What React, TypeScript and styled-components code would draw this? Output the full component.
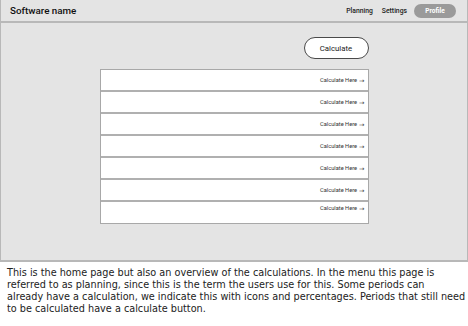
import React from "react";
import styled, { createGlobalStyle } from "styled-components";

const Global = createGlobalStyle`
  html, body { margin: 0; padding: 0; background: #ffffff; }
  body { width: 468px; height: 326px; overflow: hidden; }
`;

const Page = styled.div`
  width: 468px;
  display: flex;
  flex-direction: column;
`;

const Frame = styled.div`
  height: 262px;
  box-sizing: border-box;
  background: #e4e4e4;
  border-left: 1px solid #b8b8b8;
  border-right: 1px solid #b8b8b8;
  border-bottom: 2px solid #b8b8b8;
  display: flex;
  flex-direction: column;
`;

const Header = styled.header`
  height: 23px;
  box-sizing: border-box;
  border-bottom: 2px solid #b8b8b8;
  display: flex;
  align-items: center;
  padding: 0 11px 0 9px;
`;

const Brand = styled.div`
  font-family: Roboto, "Liberation Sans", sans-serif;
  font-weight: 500;
  font-size: 9.8px;
  color: #111;
  flex: 1;
`;

const Nav = styled.nav`
  display: flex;
  align-items: center;
  gap: 9px;
`;

const NavLink = styled.span`
  font-family: Roboto, "Liberation Sans", sans-serif;
  font-weight: 500;
  font-size: 6.8px;
  color: #222;
`;

const ProfileButton = styled.span`
  width: 42px;
  height: 14px;
  border-radius: 7px;
  background: #9a9a9a;
  color: #fff;
  font-family: Roboto, "Liberation Sans", sans-serif;
  font-weight: 700;
  font-size: 6.5px;
  display: flex;
  align-items: center;
  justify-content: center;
  margin-left: -2px;
`;

const Content = styled.main`
  width: 269px;
  margin: 0 auto;
  padding-top: 14px;
  display: flex;
  flex-direction: column;
  align-items: flex-end;
`;

const CalcButton = styled.button`
  width: 65px;
  height: 22px;
  box-sizing: border-box;
  border: 1px solid #4a4a4a;
  border-radius: 11px;
  background: #fff;
  font-family: Roboto, "Liberation Sans", sans-serif;
  font-size: 7.8px;
  color: #222;
  padding: 0;
  margin-bottom: 10px;
`;

const List = styled.div`
  width: 100%;
  box-sizing: border-box;
  border: 1px solid #a8a8a8;
  display: flex;
  flex-direction: column;
  background: #fff;
`;

const Row = styled.div<{ $last?: boolean }>`
  height: ${(p) => (p.$last ? "21px" : "22px")};
  box-sizing: border-box;
  border-bottom: ${(p) => (p.$last ? "none" : "2px solid #b0b0b0")};
  display: flex;
  justify-content: flex-end;
  align-items: ${(p) => (p.$last ? "flex-start" : "center")};
  padding: ${(p) => (p.$last ? "3px 3px 0 0" : "0 3px 0 0")};
  background: #fff;
`;

const RowLabel = styled.span`
  font-family: Roboto, "Liberation Sans", sans-serif;
  font-size: 5.7px;
  color: #333;
  display: flex;
  align-items: center;
  gap: 2px;
`;

const Arrow = styled.span`
  font-family: "DejaVu Sans", sans-serif;
  font-size: 6.5px;
  line-height: 1;
  color: #444;
  display: inline-block;
  transform: translateY(0.5px);
`;

const Caption = styled.p`
  margin: 0;
  padding: 5px 0 0 7px;
  font-family: "DejaVu Sans", Verdana, sans-serif;
  font-size: 9.7px;
  line-height: 12px;
  color: #222;
  white-space: nowrap;
`;

export default function App() {
  const rows = Array.from({ length: 7 });
  return (
    <Page>
      <Global />
      <Frame>
        <Header>
          <Brand>Software name</Brand>
          <Nav>
            <NavLink>Planning</NavLink>
            <NavLink>Settings</NavLink>
            <ProfileButton>Profile</ProfileButton>
          </Nav>
        </Header>
        <Content>
          <CalcButton>Calculate</CalcButton>
          <List>
            {rows.map((_, i) => (
              <Row key={i} $last={i === rows.length - 1}>
                <RowLabel>
                  Calculate Here <Arrow>→</Arrow>
                </RowLabel>
              </Row>
            ))}
          </List>
        </Content>
      </Frame>
      <Caption>
        This is the home page but also an overview of the calculations. In the menu this page is
        <br />
        referred to as planning, since this is the term the users use for this. Some periods can
        <br />
        already have a calculation, we indicate this with icons and percentages. Periods that still need
        <br />
        to be calculated have a calculate button.
      </Caption>
    </Page>
  );
}
